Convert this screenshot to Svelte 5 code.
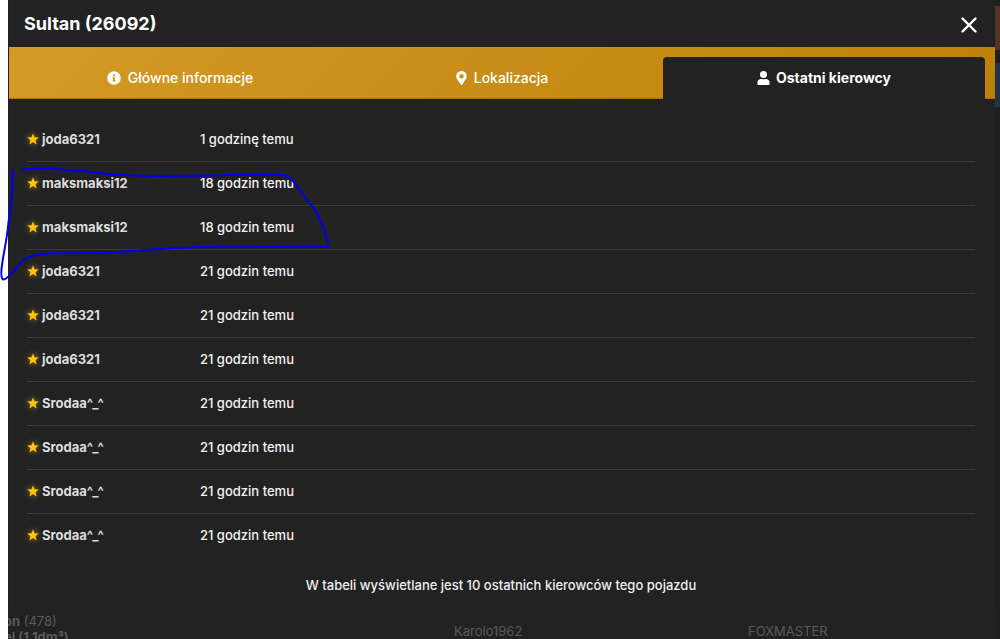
<script>
    let activeTab = $state('drivers');

    const vehicle = { name: 'Sultan', id: 26092 };

    const tabs = [
        { id: 'info', label: 'Główne informacje' },
        { id: 'location', label: 'Lokalizacja' },
        { id: 'drivers', label: 'Ostatni kierowcy' }
    ];

    const drivers = [
        { name: 'joda6321', time: '1 godzinę temu' },
        { name: 'maksmaksi12', time: '18 godzin temu' },
        { name: 'maksmaksi12', time: '18 godzin temu' },
        { name: 'joda6321', time: '21 godzin temu' },
        { name: 'joda6321', time: '21 godzin temu' },
        { name: 'joda6321', time: '21 godzin temu' },
        { name: 'Srodaa^_^', time: '21 godzin temu' },
        { name: 'Srodaa^_^', time: '21 godzin temu' },
        { name: 'Srodaa^_^', time: '21 godzin temu' },
        { name: 'Srodaa^_^', time: '21 godzin temu' }
    ];
</script>

<div class="page">
    <div class="main">
        <section class="modal" role="dialog" aria-labelledby="modal-title">
            <header>
                <h1 id="modal-title">{vehicle.name} ({vehicle.id})</h1>
                <button class="close" aria-label="Zamknij">
                    <svg width="16" height="16" viewBox="0 0 16 16">
                        <path d="M1.5 1.5l13 13M14.5 1.5l-13 13" stroke="#fff" stroke-width="2.4" stroke-linecap="round" />
                    </svg>
                </button>
            </header>

            <div class="tabs" role="tablist">
                {#each tabs as tab}
                    <button
                        class="tab"
                        class:active={activeTab === tab.id}
                        role="tab"
                        aria-selected={activeTab === tab.id}
                        onclick={() => (activeTab = tab.id)}
                    >
                        {#if tab.id === 'info'}
                            <svg width="14" height="14" viewBox="0 0 512 512">
                                <path fill="currentColor" d="M256 8a248 248 0 1 0 0 496a248 248 0 1 0 0-496zm0 110a42 42 0 1 1 0 84a42 42 0 1 1 0-84zm56 254c0 7-5 12-12 12h-88c-7 0-12-5-12-12v-24c0-7 5-12 12-12h12v-64h-12c-7 0-12-5-12-12v-24c0-7 5-12 12-12h64c7 0 12 5 12 12v100h12c7 0 12 5 12 12v24z" />
                            </svg>
                        {:else if tab.id === 'location'}
                            <svg width="11" height="14" viewBox="0 0 384 512">
                                <path fill="currentColor" d="M172 502C27 291 0 269 0 192C0 86 86 0 192 0s192 86 192 192c0 77-27 99-172 310c-10 13-30 13-40 0zm20-230a80 80 0 1 0 0-160a80 80 0 1 0 0 160z" />
                            </svg>
                        {:else}
                            <svg width="13" height="14" viewBox="0 0 448 512">
                                <path fill="currentColor" d="M224 256a128 128 0 1 0 0-256a128 128 0 1 0 0 256zm90 32h-17a174 174 0 0 1-146 0h-17C60 288 0 348 0 422v42c0 27 21 48 48 48h352c27 0 48-21 48-48v-42c0-74-60-134-134-134z" />
                            </svg>
                        {/if}
                        <span>{tab.label}</span>
                    </button>
                {/each}
            </div>

            <div class="content">
                <table>
                    <tbody>
                        {#each drivers as driver}
                            <tr>
                                <td class="name">
                                    <div class="player">
                                        <svg class="star" width="12" height="12" viewBox="0 0 24 24">
                                            <path fill="#ffc40c" d="M12 0.8l3.1 7.9 8.5 0.5-6.6 5.4 2.2 8.3L12 18.2l-7.2 4.7 2.2-8.3L0.4 9.2l8.5-0.5z" />
                                        </svg>
                                        <span>{driver.name}</span>
                                    </div>
                                </td>
                                <td>{driver.time}</td>
                            </tr>
                        {/each}
                    </tbody>
                </table>
                <p>W tabeli wyświetlane jest 10 ostatnich kierowców tego pojazdu</p>
            </div>
        </section>

        <!-- dimmed list under the dialog -->
        <div class="behind">
            <div class="vehicle">
                <div><b>on</b> (478)</div>
                <div><b>el (1.1dm³)</b></div>
            </div>
            <div class="owner">Karolo1962</div>
            <div class="owner">FOXMASTER</div>
        </div>
    </div>

    <div class="side">
        <div class="side-card brown"></div>
        <div class="side-card blue"></div>
    </div>

    <!-- freehand marking over the rows -->
    <svg class="marking" width="340" height="290" viewBox="0 0 340 290" aria-hidden="true">
        <path d="M22 169.300C34 168.500 44 168 56 168.700C66 170.500 80 170.500 92 172C112 175 138 176 165 176L210 175.500L250 174.600L282 175C290 176 294 182 299 189L312 206C318 213 320 221 324 229C326 234 327 240 328 247L240 246.600C200 247 170 248 140 250.500C105 253.500 80 252 50 253.500C30 254.500 24 258 18 266C13 272 7 280 3 279.500C1 278 1 272 2 265C4 250 7 240 8.500 222C11 205 12.500 200 12.500 170" />
    </svg>
</div>

<style>
    :global(body) {
        margin: 0;
        background: #fff;
    }

    .page {
        position: relative;
        display: flex;
        height: 100vh;
        margin-left: 8px;
        overflow: clip;
        overflow-clip-margin: 8px;
        background: #1f1f1f;
        color: #fff;
        font-family: Inter, "Noto Sans", sans-serif;
        font-size: 13px;
    }

    .main {
        flex: 1;
        min-width: 0;
    }

    .modal {
        margin-left: 1px;
        background: #222;
    }

    header {
        display: flex;
        justify-content: space-between;
        align-items: center;
        height: 47px;
        padding: 0 18px 0 15px;
    }

    h1 {
        margin: 0;
        font-size: 18px;
        font-weight: 700;
    }

    button {
        border: none;
        background: none;
        color: inherit;
        font: inherit;
        cursor: pointer;
    }

    .close {
        display: flex;
        padding: 2px 0 0;
    }

    .tabs {
        display: flex;
        height: 41px;
        padding: 10px 10px 0;
        background: linear-gradient(135deg, #d59a24, #bd810a);
        box-shadow: 0 1px #a87408;
    }

    .tab {
        display: flex;
        flex: 1;
        justify-content: center;
        align-items: center;
        gap: 7px;
        padding: 0;
        border-radius: 4px 4px 0 0;
        font-size: 14px;
        font-weight: 500;
    }

    .tab.active {
        gap: 6px;
        background: #222;
        box-shadow: 0 1px #222;
        font-weight: 700;
    }

    .content {
        padding: 20px 20px 20px 18px;
    }

    table {
        width: 100%;
        border-collapse: collapse;
        table-layout: fixed;
    }

    td {
        height: 41px;
        padding: 0 0 2px;
        border-bottom: 1px solid #3b3b3b;
        font-weight: 500;
        color: #f2f2f2;
    }

    tr:last-child td {
        border-bottom: none;
    }

    .name {
        width: 173px;
        font-weight: 700;
        color: #ddd;
    }

    .player {
        display: flex;
        align-items: center;
        gap: 3px;
    }

    .star {
        overflow: visible;
        filter: drop-shadow(0 0 3px #ffc40c99);
    }

    p {
        margin: 20px 0 0;
        line-height: 16px;
        text-align: center;
        font-weight: 500;
        color: #eee;
    }

    .behind {
        display: grid;
        grid-template-columns: 446px 294px 1fr;
        overflow: hidden;
        line-height: 16px;
        background: #212121;
        color: #5a5a5a;
    }

    .vehicle {
        margin-left: -4px;
    }

    .owner {
        padding-top: 10px;
    }

    .side {
        display: flex;
        flex-direction: column;
        gap: 13px;
        width: 5px;
        padding-top: 6px;
    }

    .side-card {
        height: 44px;
    }

    .brown {
        background: #553422;
    }

    .blue {
        background: #203646;
    }

    .marking {
        position: absolute;
        top: 0;
        left: -8px;
        fill: none;
        stroke: #0000f0;
        stroke-width: 2;
        stroke-linecap: round;
        stroke-linejoin: round;
    }
</style>
